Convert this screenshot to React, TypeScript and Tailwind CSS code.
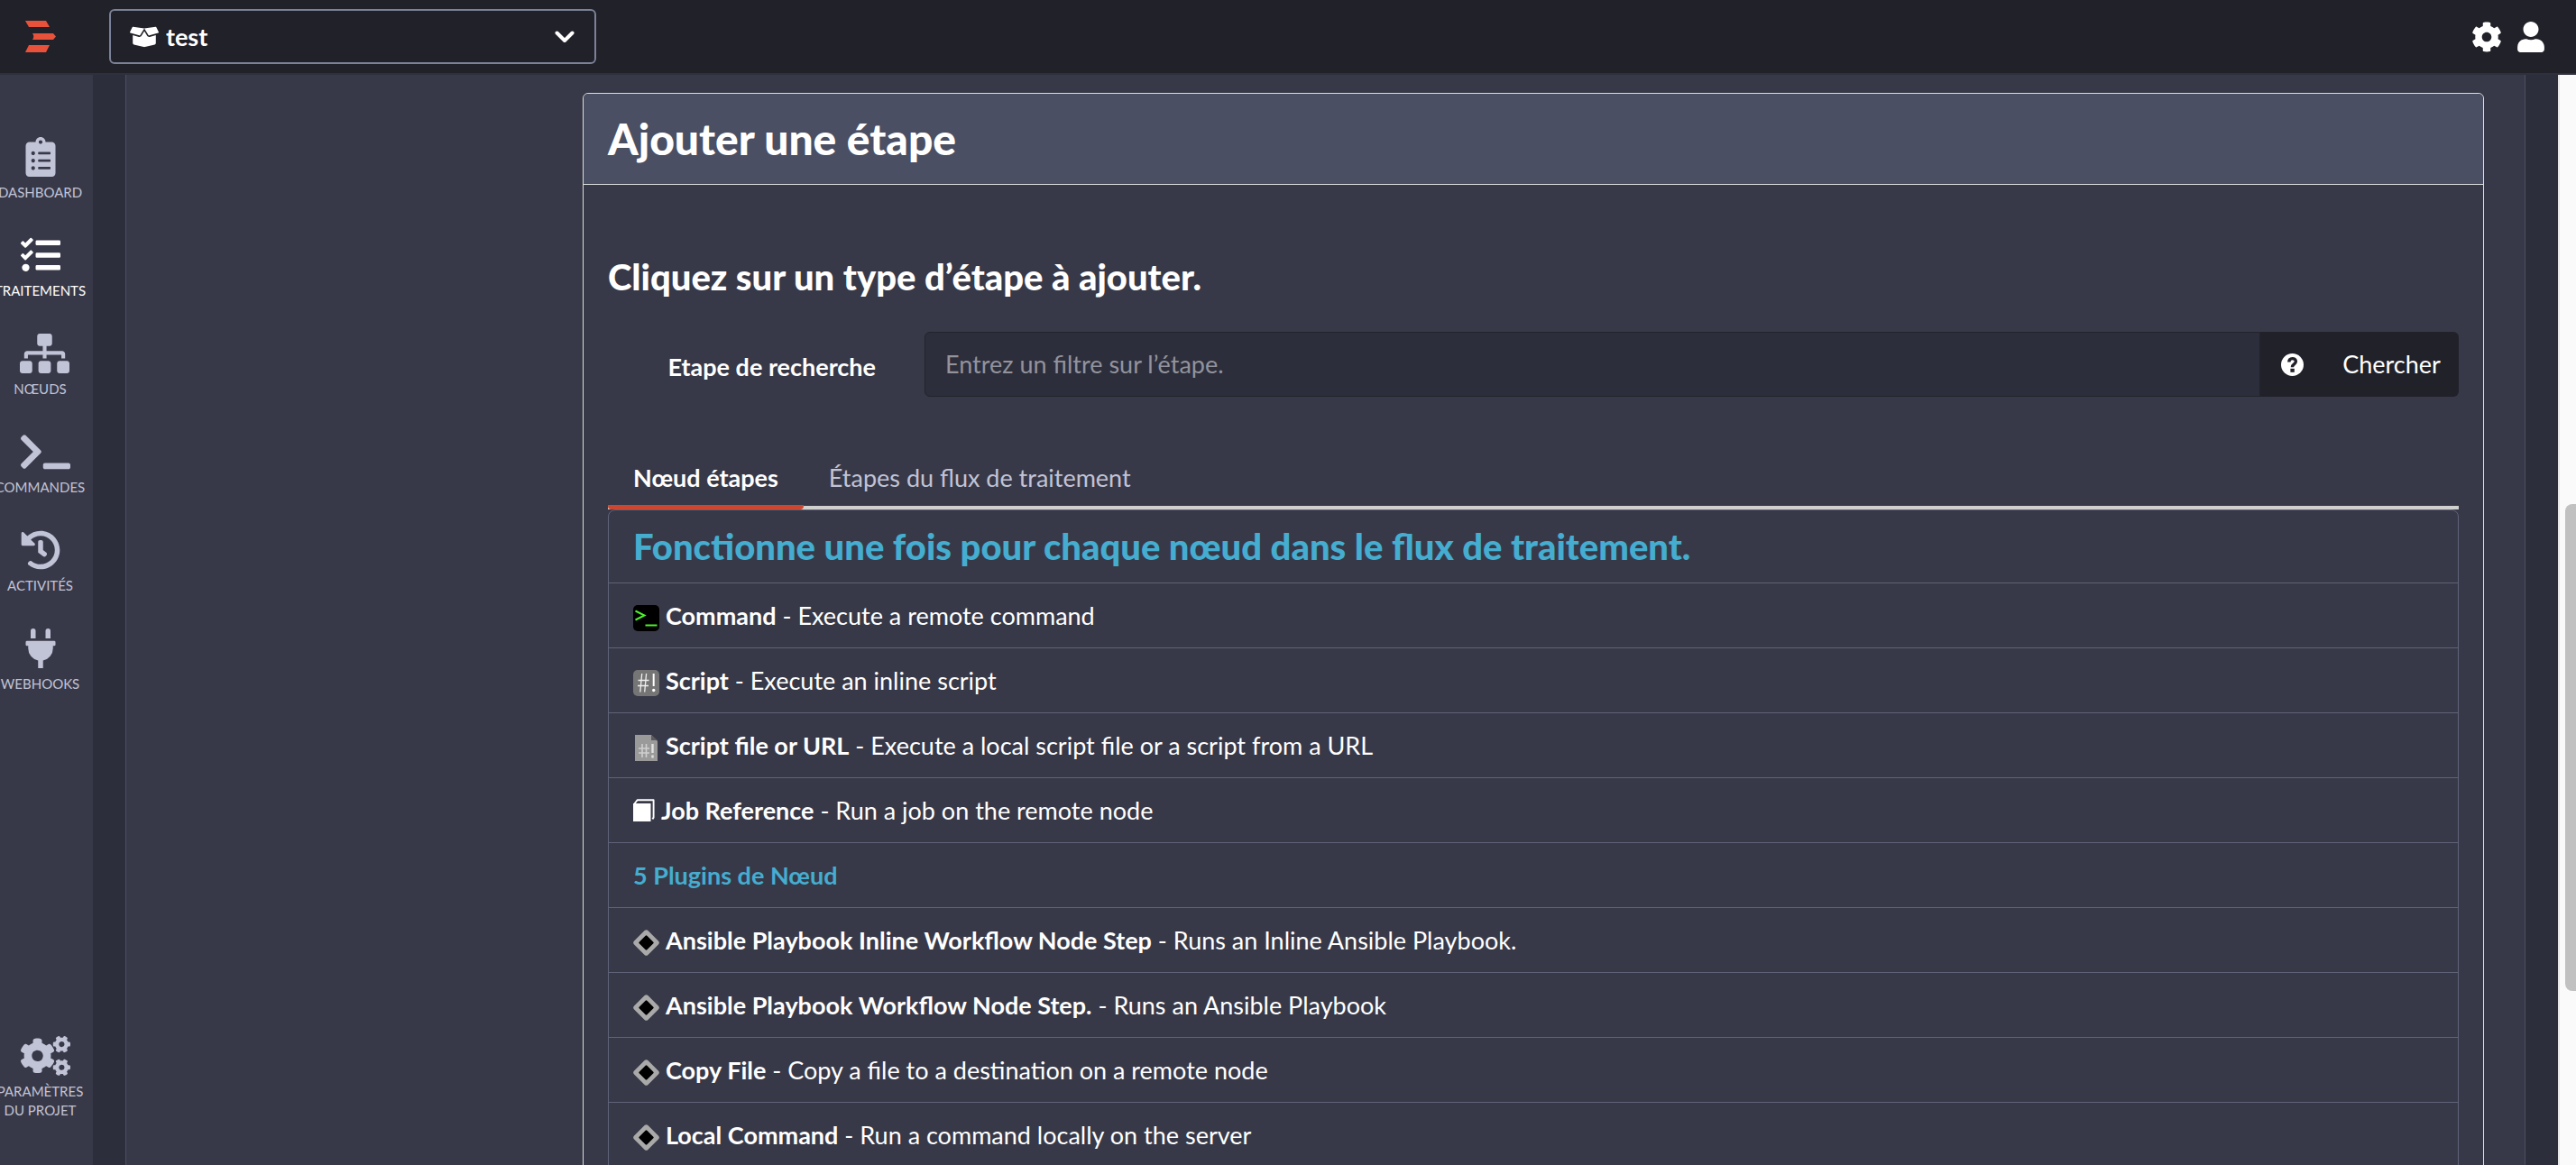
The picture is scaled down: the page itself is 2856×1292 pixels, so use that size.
import type { ReactNode } from "react";
import {
  FaBoxOpen,
  FaClipboardList,
  FaCog,
  FaCogs,
  FaHistory,
  FaPlug,
  FaSitemap,
  FaTasks,
  FaTerminal,
  FaUser,
} from "react-icons/fa";

function Logo() {
  return (
    <svg width="34" height="35" viewBox="0 0 34 35" fill="#e9523a" aria-hidden="true">
      <path d="M0 0H23L27 7H4Z" />
      <path d="M8 14H31L34 17.5L31 21H8Q10.5 17.5 8 14Z" />
      <path d="M4 27H27L23 35H0Z" />
    </svg>
  );
}

function ChevronIcon() {
  return (
    <svg width="22" height="14" viewBox="0 0 22 14" fill="none" aria-hidden="true">
      <path d="M2.5 2.5L11 11L19.5 2.5" stroke="#fff" strokeWidth="4" strokeLinecap="round" strokeLinejoin="round" />
    </svg>
  );
}

function QuestionIcon() {
  return (
    <svg width="25" height="25" viewBox="0 0 25 25" aria-hidden="true">
      <circle cx="12.5" cy="12.5" r="12.5" fill="#fff" />
      <path d="M8.8 9.6C8.8 4.4 16.4 4.6 16.4 8.8C16.4 12 12.4 11.6 12.4 15.2" fill="none" stroke="#212129" strokeWidth="3.4" />
      <rect x="10.4" y="16.8" width="4.4" height="4" fill="#212129" />
    </svg>
  );
}

function CommandIcon() {
  return (
    <svg width="29" height="29" viewBox="0 0 29 29" fill="none" aria-hidden="true">
      <rect width="29" height="29" rx="5" fill="#000" />
      <path d="M2.5 6.5L12.5 11.5L2.5 16.5" stroke="#4cf02c" strokeWidth="2" />
      <path d="M13.5 22.5H26.5" stroke="#4cf02c" strokeWidth="2" />
    </svg>
  );
}

function ScriptIcon() {
  return (
    <svg width="29" height="29" viewBox="0 0 29 29" fill="none" aria-hidden="true">
      <rect width="29" height="29" rx="5" fill="#757575" />
      <path d="M9.7 4L7.8 24.5M14.6 4L12.7 24.5M5.5 11.5H17.5M5 17.5H17" stroke="#f0f0f0" strokeWidth="1.3" />
      <path d="M22.7 4V18" stroke="#fff" strokeWidth="2" />
      <circle cx="22.7" cy="22.5" r="1.7" fill="#fff" />
    </svg>
  );
}

function ScriptFileIcon() {
  return (
    <svg width="29" height="29" viewBox="0 0 29 29" fill="none" aria-hidden="true">
      <path d="M2 0H20L27 7V29H2Z" fill="#9a9a9a" />
      <path d="M20 0V6H27Z" fill="#5c5c5c" />
      <path d="M10 10V25M14.5 10V25M6 15H18M6 20H18" stroke="#cfcfcf" strokeWidth="1.6" />
      <path d="M21.5 10V20M21.5 22.5V25.5" stroke="#e2e2e2" strokeWidth="2.4" />
    </svg>
  );
}

function BookIcon() {
  return (
    <svg width="24" height="25" viewBox="0 0 24 25" fill="none" aria-hidden="true">
      <path d="M0 5H19.5V25H0Z" fill="#fff" />
      <path d="M1 6L4.6 1.2H22.6V20.6L21.4 22.4" stroke="#fff" strokeWidth="1.9" strokeLinejoin="round" />
    </svg>
  );
}

function PluginIcon() {
  return (
    <svg width="29" height="29" viewBox="0 0 29 29" aria-hidden="true">
      <path d="M14.5 3L26 14.5L14.5 26L3 14.5Z" fill="#000" stroke="#a9a9a9" strokeWidth="5.4" strokeLinejoin="round" />
      <path d="M14.5 7.5L21.5 14.5L14.5 21.5L7.5 14.5Z" fill="#000" stroke="#000" strokeWidth="2.4" strokeLinejoin="round" />
    </svg>
  );
}

const navItems: { label: string; icon: ReactNode; active?: boolean }[] = [
  { label: "DASHBOARD", icon: <FaClipboardList size={44} className="shrink-0" /> },
  { label: "TRAITEMENTS", icon: <FaTasks size={44} className="shrink-0" />, active: true },
  { label: "NŒUDS", icon: <FaSitemap className="h-11 w-[55px] shrink-0" /> },
  { label: "COMMANDES", icon: <FaTerminal className="h-11 w-[55px] shrink-0" /> },
  { label: "ACTIVITÉS", icon: <FaHistory size={44} className="shrink-0" /> },
  { label: "WEBHOOKS", icon: <FaPlug size={44} className="shrink-0" /> },
];

function NavLink({ label, icon, active }: { label: string; icon: ReactNode; active?: boolean }) {
  return (
    <a
      href="#"
      className={`flex flex-col items-center gap-[7px] text-center text-[15px] leading-[21px] whitespace-pre ${
        active ? "text-white" : "text-[#c1c3d6]"
      }`}
    >
      <span className="flex h-11 w-11 [justify-content:safe_center]">{icon}</span>
      {label}
    </a>
  );
}

const nodeSteps: { icon: ReactNode; name: string; text: string }[] = [
  { icon: <CommandIcon />, name: "Command", text: "Execute a remote command" },
  { icon: <ScriptIcon />, name: "Script", text: "Execute an inline script" },
  { icon: <ScriptFileIcon />, name: "Script file or URL", text: "Execute a local script file or a script from a URL" },
];

const pluginSteps = [
  { name: "Ansible Playbook Inline Workflow Node Step", text: "Runs an Inline Ansible Playbook." },
  { name: "Ansible Playbook Workflow Node Step.", text: "Runs an Ansible Playbook" },
  { name: "Copy File", text: "Copy a file to a destination on a remote node" },
  { name: "Local Command", text: "Run a command locally on the server" },
];

function StepRow({ icon, name, text }: { icon: ReactNode; name: string; text: string }) {
  return (
    <li className="border-t border-[#5f6378]">
      <button type="button" className="flex h-[71px] w-full items-center gap-[7px] px-[27px] text-left">
        <span className="pt-1.5">{icon}</span>
        <span>
          <strong className="font-bold">{name}</strong> - {text}
        </span>
      </button>
    </li>
  );
}

export default function App() {
  return (
    <div className="flex h-screen flex-col overflow-hidden bg-[#2d2e3b] font-['Lato',sans-serif] text-[27px] leading-9 text-white">
      <header className="flex h-[83px] shrink-0 items-center border-b-2 border-[#2f303d] bg-[#212129] pr-[35px] pl-7">
        <a href="#" aria-label="Accueil">
          <Logo />
        </a>
        <div className="ml-[59px] flex h-[61px] w-[540px] items-center rounded-md border-2 border-[#7b8198] pr-[22px] pl-[21px]">
          <FaBoxOpen className="h-[26px] w-8 shrink-0" />
          <select aria-label="Projet" className="flex-1 appearance-none bg-transparent pl-2 font-bold">
            <option>test</option>
          </select>
          <ChevronIcon />
        </div>
        <div className="ml-auto flex items-center gap-[17px]">
          <button type="button" aria-label="Paramètres">
            <FaCog size={34} />
          </button>
          <button type="button" aria-label="Profil">
            <FaUser className="h-[34px] w-[30px]" />
          </button>
        </div>
      </header>

      <div className="flex min-h-0 flex-1">
        <nav className="flex w-[103px] shrink-0 flex-col justify-between overflow-hidden bg-[#383948] pt-[69px] pr-[14px] pb-[50px]">
          <div className="flex flex-col items-center gap-[37px]">
            {navItems.map((item) => (
              <NavLink key={item.label} {...item} />
            ))}
          </div>
          <div className="flex flex-col items-center">
            <NavLink label={"PARAMÈTRES\nDU PROJET"} icon={<FaCogs className="h-11 w-[55px] shrink-0" />} />
          </div>
        </nav>

        <main className="min-w-0 flex-1 overflow-hidden px-9">
          <div className="border-x border-[#4b4e62] bg-[#383948] pt-5 pr-[45px] pl-[506px]">
            <section className="rounded-t-md border border-[#dcdcdc]">
              <h2 className="rounded-t-md border-b border-[#dcdcdc] bg-[#4b4f63] px-[27px] py-6 text-[48px] leading-[52px] font-black">
                Ajouter une étape
              </h2>
              <div className="px-[27px] pt-[78px]">
                <h3 className="text-[40px] leading-12 font-black">Cliquez sur un type d’étape à ajouter.</h3>

                <form className="mt-[37px] flex items-center gap-[54px]">
                  <label htmlFor="step-filter" className="w-[297px] shrink-0 pt-1.5 text-right font-bold">
                    Etape de recherche
                  </label>
                  <div className="flex h-[72px] flex-1">
                    <input
                      id="step-filter"
                      type="text"
                      placeholder="Entrez un filtre sur l’étape."
                      className="min-w-0 flex-1 rounded-l-md border border-[#22232b] bg-[#2d2e3b] px-[22px] placeholder:text-[#92939d]"
                    />
                    <button type="button" aria-label="Aide" className="flex w-[71px] items-center justify-center bg-[#212129]">
                      <QuestionIcon />
                    </button>
                    <button type="submit" className="w-[149px] rounded-r-md bg-[#212129]">
                      Chercher
                    </button>
                  </div>
                </form>

                <div role="tablist" className="mt-[51px] flex border-b-4 border-[#d0d0ce]">
                  <button
                    type="button"
                    role="tab"
                    aria-selected="true"
                    className="-mb-1 h-[74px] rounded-b-sm border-b-5 border-[#cc4630] px-7 pt-2 font-bold"
                  >
                    Nœud étapes
                  </button>
                  <button type="button" role="tab" aria-selected="false" className="h-[70px] px-7 pt-2 text-[#c1c3d6]">
                    Étapes du flux de traitement
                  </button>
                </div>

                <div className="rounded-t-lg border border-[#5f6378]">
                  <h4 className="px-[27px] py-4 text-[40px] leading-12 font-black text-[#45add0]">
                    Fonctionne une fois pour chaque nœud dans le flux de traitement.
                  </h4>
                  <ul>
                    {nodeSteps.map((step) => (
                      <StepRow key={step.name} {...step} />
                    ))}
                    <li className="border-t border-[#5f6378]">
                      <button type="button" className="flex h-[71px] w-full items-center gap-[7px] px-[27px] text-left">
                        <BookIcon />
                        <span>
                          <strong className="font-bold">Job Reference</strong> - Run a job on the remote node
                        </span>
                      </button>
                    </li>
                    <li className="flex h-18 items-center border-t border-[#5f6378] px-[27px] font-bold text-[#45add0]">
                      5 Plugins de Nœud
                    </li>
                    {pluginSteps.map((step) => (
                      <StepRow key={step.name} icon={<PluginIcon />} {...step} />
                    ))}
                  </ul>
                </div>
              </div>
            </section>
          </div>
        </main>

        <div aria-hidden="true" className="flex w-5 shrink-0 flex-col border-l-2 border-[#e8e8e8] bg-[#fafafa] pl-1.5">
          <div className="grow-[476]" />
          <div className="grow-[540] rounded-l-lg bg-[#c1c1c1]" />
          <div className="grow-[193]" />
        </div>
      </div>
    </div>
  );
}
